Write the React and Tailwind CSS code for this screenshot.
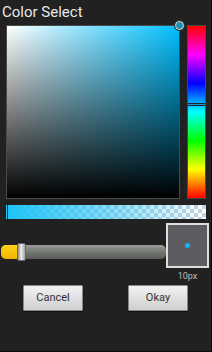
import React from "react";

/* ───────── colour picker dialog ───────── */
const FONT = { fontFamily: "Roboto, 'Noto Sans', sans-serif" };

function Btn({ children }) {
  return (
    <button className="w-[60px] h-[26px] rounded-[1px] border border-[#8a8a8a] bg-[linear-gradient(to_bottom,#f2f2f2,#cfcfcf)] text-[11px] text-[#333] shadow-[0_1px_1px_rgba(0,0,0,0.6)]">
      {children}
    </button>
  );
}

export default function App() {
  return (
    <div style={FONT} className="w-[212px] h-[352px] bg-[#212121] border-r border-b border-[#0b0b0b] flex flex-col overflow-hidden">
      {/* title */}
      <div className="h-[25px] pl-[2px] pt-[2px] text-[15px] leading-[20px] text-[#e8e8e8]">Color Select</div>

      {/* sat/val square + hue bar */}
      <div className="flex pl-[6px] gap-[7px]">
        <div className="relative w-[174px] h-[174px] border border-[#4a4a4a] bg-[#00c0ff]">
          <div className="absolute inset-0 bg-[linear-gradient(to_right,#fff,rgba(255,255,255,0))]" />
          <div className="absolute inset-0 bg-[linear-gradient(to_bottom,rgba(0,0,0,0),#000)]" />
          <div className="absolute -top-[5px] -right-[5px] w-[9px] h-[9px] rounded-full border-[1.5px] border-[#d8d8d8] bg-[#1a8fb0] shadow-[0_0_0_1px_#333]" />
        </div>
        <div className="relative w-[19px] h-[174px] border border-[#4a4a4a] bg-[linear-gradient(to_bottom,#f00,#f0f,#00f,#0ff,#0f0,#ff0,#f00)]">
          <div className="absolute left-0 right-0 top-[77px] h-[3px] border-y border-[#222] bg-[#1c8fd0]" />
        </div>
      </div>

      {/* alpha bar */}
      <div className="relative ml-[6px] mt-[6px] w-[200px] h-[14px] bg-[repeating-conic-gradient(#c9d3dc_0_25%,#fff_0_50%)] bg-[length:8px_8px]">
        <div className="absolute inset-0 bg-[linear-gradient(to_right,#1ec3f7,rgba(30,195,247,0.55)_50%,rgba(30,195,247,0))]" />
        <div className="absolute left-[1px] top-0 bottom-0 w-[1px] bg-[#0d3a4a]" />
      </div>

      {/* stroke width slider + preview */}
      <div className="flex mt-[4px]">
        <div className="relative w-[166px] h-[45px]">
          <div className="absolute left-[1px] right-0 top-[22px] h-[14px] rounded-[5px] bg-[linear-gradient(to_bottom,#9a9c98,#6e706c_60%,#5c5e5a)]" />
          <div className="absolute left-[1px] w-[20px] top-[22px] h-[14px] rounded-l-[5px] bg-[linear-gradient(to_bottom,#ffd21a,#f0b400)]" />
          <div className="absolute left-[17px] top-[20px] w-[9px] h-[18px] rounded-[2px] bg-[linear-gradient(to_right,#8c8c8c,#f0f0f0_45%,#a0a0a0)] border border-[#666]" />
        </div>
        <div className="flex flex-col items-center">
          <div className="w-[43px] h-[45px] border-2 border-[#dedede] bg-[#5d5c61] flex items-center justify-center">
            <div className="w-[5px] h-[5px] rounded-full bg-[#12b4f5]" />
          </div>
          <div className="mt-[3px] text-[9px] leading-[10px] text-[#bdbdbd]">10px</div>
        </div>
      </div>

      {/* actions */}
      <div className="flex mt-[4px] pl-[23px] gap-[45px]">
        <Btn>Cancel</Btn>
        <Btn>Okay</Btn>
      </div>
    </div>
  );
}
